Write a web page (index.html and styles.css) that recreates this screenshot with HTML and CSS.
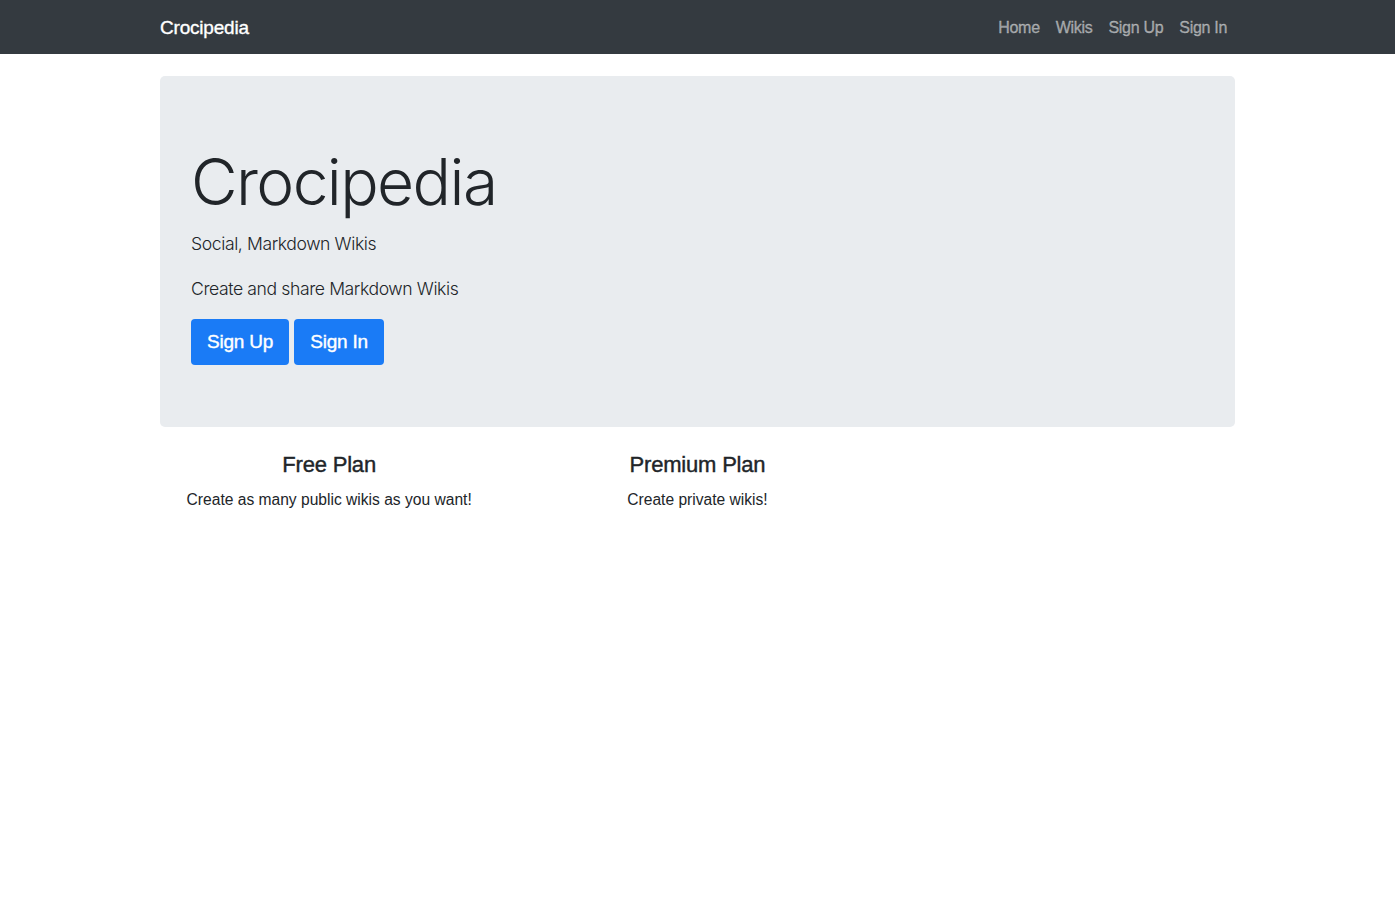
FILE: index.html
```html
<!DOCTYPE html>
<html lang="en">
<head>
<meta charset="utf-8">
<title>Crocipedia</title>
<link rel="stylesheet" href="styles.css">
</head>
<body>
<nav class="navbar">
  <div class="nav-inner">
    <a class="brand" href="#">Crocipedia</a>
    <ul class="nav-links">
      <li><a href="#">Home</a></li>
      <li><a href="#">Wikis</a></li>
      <li><a href="#">Sign Up</a></li>
      <li><a href="#">Sign In</a></li>
    </ul>
  </div>
</nav>
<main class="container">
  <section class="jumbotron">
    <h1 class="display">Crocipedia</h1>
    <p class="lead">Social, Markdown Wikis</p>
    <p class="lead">Create and share Markdown Wikis</p>
    <div class="actions">
      <a class="btn" href="#">Sign Up</a>
      <a class="btn" href="#">Sign In</a>
    </div>
  </section>
  <section class="plans">
    <div class="plan">
      <h4>Free Plan</h4>
      <p>Create as many public wikis as you want!</p>
    </div>
    <div class="plan">
      <h4>Premium Plan</h4>
      <p>Create private wikis!</p>
    </div>
    <div class="plan"></div>
  </section>
</main>
</body>
</html>
```
FILE: styles.css
```css
* { box-sizing: border-box; }
html, body { margin: 0; padding: 0; }
body {
  font-family: "Liberation Sans", Arial, sans-serif;
  font-size: 16px;
  line-height: 1.5;
  color: #212529;
  background: #fff;
}
a { text-decoration: none; }

.navbar {
  background: #343a40;
  height: 54px;
}
.nav-inner {
  width: 1105px;
  margin: 0 auto;
  padding: 0 15px;
  height: 100%;
  display: flex;
  align-items: center;
  justify-content: space-between;
}
.brand {
  color: #fff;
  font-size: 19px;
  letter-spacing: -0.2px;
  -webkit-text-stroke: 0.35px currentColor;
  margin-top: 2px;
}
.nav-links {
  list-style: none;
  margin: 2px 0 0;
  padding: 0;
  display: flex;
}
.nav-links a {
  display: block;
  padding: 0 8px;
  color: rgba(255,255,255,.5);
  font-size: 16px;
  letter-spacing: -0.3px;
  -webkit-text-stroke: 0.3px currentColor;
}

.container {
  width: 1105px;
  margin: 0 auto;
  padding: 22px 15px 0;
}
.jumbotron {
  background: #e9ecef;
  border-radius: 5px;
  padding: 68px 31px 62px;
  margin-bottom: 25px;
}
.display {
  font-family: Inter, "Liberation Sans", sans-serif;
  font-weight: 300;
  font-size: 64px;
  line-height: 1.2;
  letter-spacing: -1.6px;
  margin: 0 0 8px;
}
.lead {
  font-family: Inter, "Liberation Sans", sans-serif;
  font-weight: 300;
  font-size: 17.6px;
  letter-spacing: -0.4px;
  line-height: 29px;
  margin: 0 0 16px;
}
.actions {
  display: flex;
  gap: 5px;
}
.btn {
  display: inline-block;
  background: #1a7bf6;
  color: #fff;
  font-size: 19px;
  line-height: 28px;
  padding: 9px 16px;
  border-radius: 4px;
  letter-spacing: -0.2px;
  -webkit-text-stroke: 0.4px currentColor;
}

.plans {
  display: flex;
  margin: 0 -15px;
}
.plan {
  flex: 1 1 0;
  padding: 0 15px;
  text-align: center;
}
.plan h4 {
  font-size: 22px;
  font-weight: 500;
  line-height: 1.2;
  margin: 0 0 10px;
  letter-spacing: -0.2px;
  -webkit-text-stroke: 0.4px currentColor;
}
.plan p {
  font-size: 15.6px;
  margin: 0;
}
```
